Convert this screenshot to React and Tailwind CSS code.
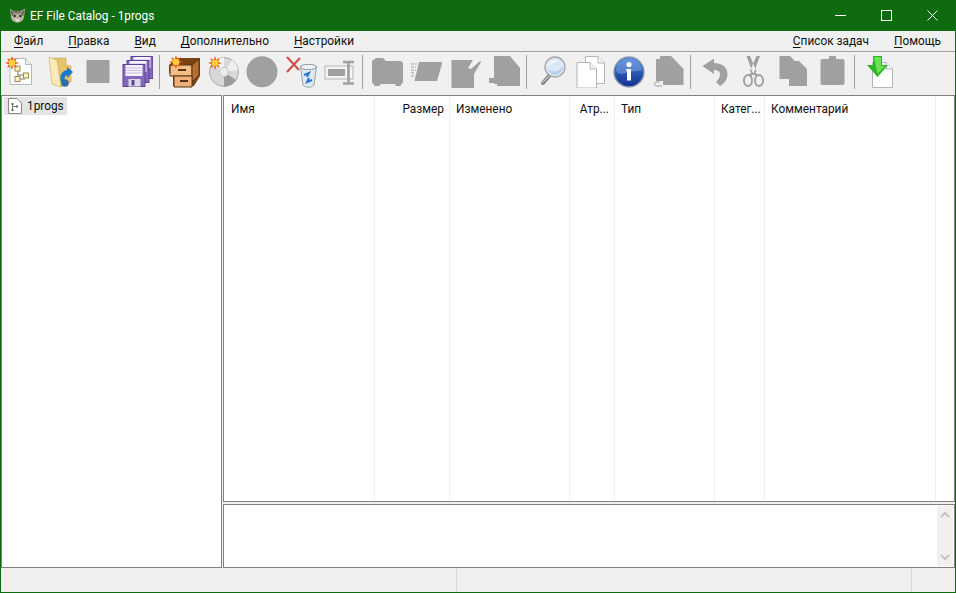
const G = "#a0a0a0";

function Burst({ x = 0, y = 0, s = 1 }) {
  const pts = [];
  for (let i = 0; i < 16; i++) {
    const r = i % 2 ? 3.4 : 7;
    const a = (i * Math.PI) / 8;
    pts.push(`${(8 + Math.cos(a) * r).toFixed(1)},${(8 + Math.sin(a) * r).toFixed(1)}`);
  }
  return (
    <g transform={`translate(${x} ${y}) scale(${s})`}>
      <polygon points={pts.join(" ")} fill="#ee5a12" />
      <circle cx="8" cy="8" r="3.2" fill="#ffd23c" />
    </g>
  );
}

function Ico({ children }) {
  return (
    <div className="w-[39px] shrink-0 flex justify-center">
      <svg width="32" height="32" viewBox="0 0 32 32" className="block">{children}</svg>
    </div>
  );
}

function Sep() {
  return (
    <div className="w-[8px] shrink-0 pl-[3px]">
      <div className="w-px h-[34px] mt-[-1px] bg-[#a0a0a0]" />
    </div>
  );
}

function Disk({ x, y }) {
  return (
    <g transform={`translate(${x} ${y})`}>
      <rect x=".5" y=".5" width="22" height="22" fill="#8466bc" stroke="#5c4494" />
      <rect x="3" y="1" width="17" height="11" fill="#f4f2fa" />
      <path d="M4 4H19M4 6.5H19M4 9H19" stroke="#c6bee0" />
      <rect x="6" y="15" width="12" height="7.5" fill="#dcd8e8" />
      <rect x="9" y="16" width="3" height="5.5" fill="#5c4494" />
    </g>
  );
}

const Icons = {
  newTree: (
    <>
      <path d="M6 2.5H21.5L27.5 8.5V28.5H6Z" fill="#fff" stroke="#b8b8b8" />
      <path d="M21.5 2.5V8.5H27.5" fill="#eee" stroke="#b8b8b8" />
      <path d="M14 14V23H21M14 19H21" fill="none" stroke="#777" />
      <rect x="11" y="10" width="5" height="5" fill="#fff3c8" stroke="#a08a50" />
      <rect x="19.5" y="17" width="5" height="5" fill="#fff3c8" stroke="#a08a50" />
      <rect x="11" y="20.5" width="5" height="5" fill="#fff3c8" stroke="#a08a50" />
      <Burst x="0" y="-1" />
    </>
  ),
  open: (
    <>
      <path d="M10 2H23V9L28 10V26L17 31Z" fill="#e6c46e" stroke="#c8a95a" strokeWidth=".6" />
      <path d="M6 1L14 4L18 31L9 28Z" fill="#fbebb8" stroke="#c8a95a" strokeWidth=".6" />
      <path d="M18 26C16 19 19 15 24 14V11L30 16L24 22V19C22 20 21 22 22 26Z" fill="#1a78cf" />
      <circle cx="22" cy="27" r="3.8" fill="#2f6da8" />
    </>
  ),
  square: <rect x="4.5" y="4" width="23" height="23" fill={G} />,
  floppy: (
    <>
      <Disk x="9.5" y="0" />
      <Disk x="5.5" y="4" />
      <Disk x="1.5" y="8" />
    </>
  ),
  drawers: (
    <>
      <path d="M1 9L9 2H32V20L26 30H5V17L1 17Z" fill="#7a4414" />
      <path d="M2 9H24V20H2Z" fill="#f3bd85" stroke="#5a3210" />
      <path d="M24 9L31 3V19L24 26Z" fill="#b5702e" stroke="#5a3210" />
      <path d="M6 20H24V31H6Z" fill="#eeb077" stroke="#5a3210" />
      <rect x="10" y="13" width="8" height="2" fill="#5a3210" />
      <rect x="12" y="24" width="8" height="2" fill="#5a3210" />
      <Burst x="0" y="-2" />
    </>
  ),
  cd: (
    <>
      <circle cx="17" cy="16" r="14.5" fill="#d8d8d8" stroke="#aaa" />
      <path d="M17 16L5 8A14.5 14.5 0 0 1 17 1.5Z" fill="#f4f4f4" />
      <path d="M17 16L29 24A14.5 14.5 0 0 1 17 30.5Z" fill="#9c9c9c" />
      <path d="M17 16L31 14A14.5 14.5 0 0 0 25 4Z" fill="#eee" />
      <circle cx="17" cy="16" r="4.5" fill="#f2f2f2" stroke="#bbb" />
      <circle cx="17" cy="16" r="1.8" fill="#fff" stroke="#bbb" strokeWidth=".5" />
      <Burst x="0" y="-1" />
    </>
  ),
  circle: <circle cx="16" cy="15.7" r="15.5" fill={G} />,
  trash: (
    <>
      <path d="M2 1L14 14M15 2L2 16" stroke="#cf5050" strokeWidth="2.2" fill="none" />
      <path d="M15.5 11H31.5L29 29C26 32 21 32 18 29Z" fill="#dfe8ee" stroke="#99a6ae" />
      <ellipse cx="23.5" cy="11" rx="8" ry="2.6" fill="#eef3f6" stroke="#8a98a0" />
      <path d="M19 19L24 17L22 21M27 24L22 26L24 22" fill="none" stroke="#2a78c8" strokeWidth="2" />
    </>
  ),
  renameOff: (
    <>
      <rect x="1" y="10" width="28" height="13" fill="#f4f4f4" stroke="#b5b5b5" />
      <rect x="4" y="13" width="17" height="7" fill={G} />
      <path d="M19 6H30M19 27.5H30M24.5 6V27.5" stroke={G} strokeWidth="2.6" fill="none" />
    </>
  ),
  folderOff: (
    <path d="M2 4L5 2H12L15 5H30L32 7V27L30 28V30H25L24 28H10L8 30H3V28L1 27V5Z" fill={G} />
  ),
  tagOff: (
    <>
      <path d="M9 6H32.5L27 25H4.5Z" fill={G} />
      <path d="M1 8H7M1 11H6M1 14H6M1 17H5M1 20H5" stroke={G} strokeDasharray="3 1" />
    </>
  ),
  editOff: (
    <path d="M2.5 4H24L19 12L22 13L31 5L32 6L25 18V32H2.5Z" fill={G} />
  ),
  docOff: (
    <path d="M6 0H22L32 12V30H9V28H6V27H1V22H6Z" fill={G} />
  ),
  search: (
    <>
      <path d="M8 27L15 19" stroke="#888" strokeWidth="4" strokeLinecap="round" />
      <path d="M7.5 26.5L14 20" stroke="#ddd" strokeWidth="1" />
      <circle cx="20" cy="11" r="10" fill="#dbe8f6" stroke="#a8a8a8" strokeWidth="1.4" />
      <path d="M13 10A8 8 0 0 1 24 5C20 5 16 7 13 10Z" fill="#fff" />
      <path d="M13 13C18 17 24 16 28 10C28 15 24 19 20 19C17 19 14 16 13 13Z" fill="#b7cfec" />
    </>
  ),
  docs: (
    <>
      <path d="M11.5 .5H24L30.5 7V27.5H11.5Z" fill="#fff" stroke="#b5b5b5" />
      <path d="M24 .5V7H30.5" fill="#f2f2f2" stroke="#b5b5b5" />
      <path d="M3 6.5H16L22.5 13V32H3Z" fill="#fff" stroke="#b5b5b5" />
      <path d="M16 6.5V13H22.5" fill="#f2f2f2" stroke="#b5b5b5" />
    </>
  ),
  info: (
    <>
      <defs>
        <linearGradient id="ig" x1="0" y1="0" x2="0" y2="1">
          <stop offset="0" stopColor="#4c82d8" />
          <stop offset="1" stopColor="#0e2f90" />
        </linearGradient>
      </defs>
      <circle cx="16" cy="16" r="15" fill="url(#ig)" stroke="#8f9bb0" strokeWidth="1.4" />
      <path d="M3 15C8 22 18 13 29 15C29 7 23 2.5 16 2.5C9 2.5 3 7 3 15Z" fill="#8fb2e8" opacity=".45" />
      <circle cx="16" cy="8.5" r="2.6" fill="#fff" />
      <path d="M13.2 13H18V24.5H14V15H13.2Z" fill="#fff" />
    </>
  ),
  pasteOff: (
    <>
      <path d="M8 0H19L23 4L31.5 13V29H11V25H4V3H8Z" fill={G} />
      <path d="M8 26H4A2 2 0 0 0 5 30H10" fill="none" stroke={G} />
    </>
  ),
  undo: (
    <path d="M3.5 10L15 2.5V7C24 7 28.5 12 28.5 18C28.5 23 25 28 21 30L17 26C19 24 21 22 21 18C21 15 18 14 15 14V18Z" fill={G} />
  ),
  cut: (
    <>
      <path d="M8.5 0L12 0L18.5 15L15.5 19ZM22 0L18.5 0L12 15L15 19Z" fill={G} />
      <path d="M15 17L11.5 19.5M15.5 17L19.5 19.5" stroke={G} strokeWidth="2.4" />
      <ellipse cx="10" cy="24.5" rx="4" ry="5.5" fill="none" stroke={G} strokeWidth="2" />
      <ellipse cx="21" cy="24.5" rx="4" ry="5.5" fill="none" stroke={G} strokeWidth="2" />
    </>
  ),
  copyOff: (
    <path d="M2.5 0H13L18 5H22L30 13V30H12V23H2.5Z" fill={G} />
  ),
  clipOff: (
    <>
      <rect x="4.5" y="3" width="24" height="26" rx="2" fill={G} />
      <rect x="13" y="0" width="7" height="5" rx="1" fill={G} />
    </>
  ),
  download: (
    <>
      <path d="M9.5 6.5H23L29.5 13V31.5H9.5Z" fill="#fff" stroke="#b5b5b5" />
      <path d="M23 6.5V13H29.5" fill="#f2f2f2" stroke="#b5b5b5" />
      <path d="M10 0H19V9H25L14.5 21L4 9H10Z" fill="#2cb52c" />
      <path d="M11 1H18V10H22L14.5 18Z" fill="#6fe04f" />
    </>
  ),
};

function Menu({ u, r }) {
  return (
    <span className="whitespace-nowrap">
      <span className="underline underline-offset-2">{u}</span>
      {r}
    </span>
  );
}

function Col({ w, children, right, last, first }) {
  return (
    <div className={`shrink-0 h-full ${last ? "flex-1" : "border-r border-[#f0f0f0]"} ${w}`}>
      <div className={`h-[27px] flex items-center whitespace-nowrap ${right ? "justify-end pr-[5px]" : first ? "pl-[7px]" : "pl-[6px]"}`}>
        {children}
      </div>
    </div>
  );
}

export default function App() {
  return (
    <div
      className="w-[956px] h-[593px] flex flex-col overflow-hidden border-x border-b border-[#0f6b10] bg-[#f0f0f0] text-[11.85px] text-[#111]"
      style={{ fontFamily: 'Roboto, "Open Sans", sans-serif' }}
    >
      <div className="h-[31px] shrink-0 flex items-center bg-[#0f6b10] text-white -mx-px">
        <svg width="17" height="17" viewBox="0 0 18 17" className="ml-[9px] mr-[4px]">
          <path d="M1 1L5 4H12L17 1L16 9C16 13 13 16 9 16C5 16 2 13 2 9Z" fill="#b8b2a4" />
          <path d="M1.5 2L5 5V8L3 9ZM16.5 2L13 5V8L15 9Z" fill="#6e6458" />
          <path d="M6 3H9V7L6 6ZM10 3H12V6L10 7Z" fill="#6a6056" />
          <circle cx="6" cy="9" r="1.3" fill="#2c2c26" />
          <circle cx="12" cy="9" r="1.3" fill="#2c2c26" />
          <path d="M6 12H12L9 15.5Z" fill="#eee8dc" />
          <path d="M8 11.5H10L9 13Z" fill="#b77468" />
        </svg>
        <span className="pt-[2px]">EF File Catalog - 1progs</span>
        <div className="ml-auto mr-px flex h-full items-center text-white">
          <div className="w-[46px] flex justify-center">
            <svg width="11" height="11" viewBox="0 0 11 11"><path d="M0 5.5H11" stroke="#fff" strokeWidth="1" /></svg>
          </div>
          <div className="w-[46px] flex justify-center">
            <svg width="11" height="11" viewBox="0 0 11 11"><rect x=".5" y=".5" width="10" height="10" fill="none" stroke="#fff" /></svg>
          </div>
          <div className="w-[46px] flex justify-center">
            <svg width="11" height="11" viewBox="0 0 11 11"><path d="M.5 .5L10.5 10.5M10.5 .5L.5 10.5" stroke="#fff" /></svg>
          </div>
        </div>
      </div>

      <div className="h-[21px] shrink-0 flex items-center gap-[25px] pl-[13px] pr-[14px] pt-[2px] border-b border-[#a0a0a0]">
        <Menu u="Ф" r="айл" />
        <Menu u="П" r="равка" />
        <Menu u="В" r="ид" />
        <Menu u="Д" r="ополнительно" />
        <Menu u="Н" r="астройки" />
        <span className="ml-auto"><Menu u="С" r="писок задач" /></span>
        <Menu u="П" r="омощь" />
      </div>

      <div className="h-[43px] shrink-0 flex items-start pt-[4px] -ml-px">
        <Ico>{Icons.newTree}</Ico>
        <Ico>{Icons.open}</Ico>
        <Ico>{Icons.square}</Ico>
        <Ico>{Icons.floppy}</Ico>
        <Sep />
        <Ico>{Icons.drawers}</Ico>
        <Ico>{Icons.cd}</Ico>
        <Ico>{Icons.circle}</Ico>
        <Ico>{Icons.trash}</Ico>
        <Ico>{Icons.renameOff}</Ico>
        <Sep />
        <Ico>{Icons.folderOff}</Ico>
        <Ico>{Icons.tagOff}</Ico>
        <Ico>{Icons.editOff}</Ico>
        <Ico>{Icons.docOff}</Ico>
        <Sep />
        <Ico>{Icons.search}</Ico>
        <Ico>{Icons.docs}</Ico>
        <Ico>{Icons.info}</Ico>
        <Ico>{Icons.pasteOff}</Ico>
        <Sep />
        <Ico>{Icons.undo}</Ico>
        <Ico>{Icons.cut}</Ico>
        <Ico>{Icons.copyOff}</Ico>
        <Ico>{Icons.clipOff}</Ico>
        <Sep />
        <Ico>{Icons.download}</Ico>
      </div>

      <div className="h-[473px] shrink-0 flex gap-px">
        <div className="w-[221px] shrink-0 border border-[#808080] bg-white pt-px pl-[2px]">
          <div className="w-[63px] h-[18px] flex items-center bg-[#e4e4e4]">
            <svg width="16" height="16" viewBox="0 0 16 16" className="ml-[3px] mr-[4px]">
              <path d="M1.5 .5H10L14.5 5V15.5H1.5Z" fill="#fff" stroke="#8a8a8a" />
              <path d="M5.5 6V12M5.5 8.5H10" fill="none" stroke="#777" />
              <rect x="4.5" y="5" width="2" height="2" fill="#666" />
              <rect x="9" y="7.5" width="2" height="2" fill="#666" />
              <rect x="4.5" y="11" width="2" height="2" fill="#666" />
            </svg>
            <span className="pt-[2px]">1progs</span>
          </div>
        </div>
        <div className="flex-1 flex flex-col min-w-0">
          <div className="h-[407px] shrink-0 flex border border-[#808080] bg-white">
            <Col w="w-[151px]" first>Имя</Col>
            <Col w="w-[75px]" right>Размер</Col>
            <Col w="w-[120px]">Изменено</Col>
            <Col w="w-[45px]" right>Атр...</Col>
            <Col w="w-[100px]">Тип</Col>
            <Col w="w-[50px]">Катег...</Col>
            <Col w="w-[171px]">Комментарий</Col>
            <Col w="" last />
          </div>
          <div className="mt-[2px] flex-1 min-h-0 flex justify-end border border-[#808080] bg-white pr-[1px] py-[1px]">
            <div className="w-[16px] h-full flex flex-col justify-between items-center py-[5px] bg-[#f0f0f0]">
              <svg width="10" height="7" viewBox="0 0 10 7"><path d="M1 6L5 2L9 6" fill="none" stroke="#c4c4c4" strokeWidth="2" /></svg>
              <svg width="10" height="7" viewBox="0 0 10 7"><path d="M1 1L5 5L9 1" fill="none" stroke="#c4c4c4" strokeWidth="2" /></svg>
            </div>
          </div>
        </div>
      </div>

      <div className="h-[24px] shrink-0 flex">
        <div className="w-[456px] border-r border-[#d8d8d8]" />
        <div className="w-[455px] border-r border-[#d8d8d8]" />
        <div className="flex-1" />
      </div>
    </div>
  );
}
